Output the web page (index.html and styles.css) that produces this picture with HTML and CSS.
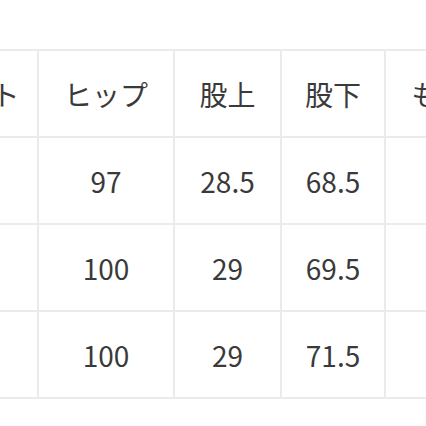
FILE: index.html
```html
<!DOCTYPE html>
<html lang="ja">
<head>
<meta charset="utf-8">
<link rel="stylesheet" href="styles.css">
</head>
<body>
<div class="wrap">
<table class="size-table">
<colgroup>
<col class="c1"><col class="c2"><col class="c3"><col class="c4"><col class="c5">
</colgroup>
<thead>
<tr><th>ウエスト</th><th>ヒップ</th><th>股上</th><th>股下</th><th>もも周り</th></tr>
</thead>
<tbody>
<tr><td></td><td>97</td><td>28.5</td><td>68.5</td><td></td></tr>
<tr><td></td><td>100</td><td>29</td><td>69.5</td><td></td></tr>
<tr><td></td><td>100</td><td>29</td><td>71.5</td><td></td></tr>
</tbody>
</table>
</div>
</body>
</html>
```
FILE: styles.css
```css
html, body {
  margin: 0;
  padding: 0;
  background: #ffffff;
  overflow: hidden;
}
.wrap {
  padding-top: 49px;
  width: 426px;
  height: 377px;
  overflow: hidden;
}
.size-table {
  margin-left: -112px;
  border-collapse: collapse;
  table-layout: fixed;
  width: 661px;
  font-family: "Noto Sans CJK JP", "Noto Sans", sans-serif;
  font-size: 28px;
  color: #3a3a3a;
}
.c1 { width: 149px; }
.c2 { width: 136px; }
.c3 { width: 107px; }
.c4 { width: 104px; }
.c5 { width: 165px; }
.size-table th,
.size-table td {
  border: 2px solid #ebebeb;
  text-align: center;
  vertical-align: middle;
  font-weight: normal;
  height: 85px;
  padding: 0;
  white-space: nowrap;
}
```
